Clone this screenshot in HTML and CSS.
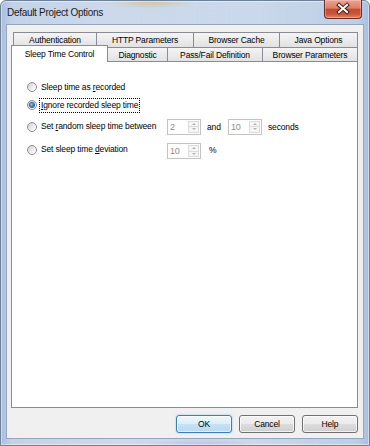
FILE: index.html
```html
<!DOCTYPE html>
<html>
    <head>
        <link rel="stylesheet" href="styles.css">
        <title>Default Project Options</title>
        <meta charset="UTF-8">
        <meta name="viewport" content="width=device-width, initial-scale=1.0">
    </head>
    <body>
        <div class="window">
            <div class="titlebar">
                <span class="title">Default Project Options</span>
                <div class="close-btn">
                    <svg width="36" height="18" viewBox="0 0 36 18">
                        <path d="M14 5 L22 12 M22 5 L14 12" stroke="#4b1c15" stroke-width="4" stroke-linecap="square"/>
                        <path d="M14 5 L22 12 M22 5 L14 12" stroke="#ffffff" stroke-width="2" stroke-linecap="square"/>
                    </svg>
                </div>
            </div>
            <div class="client">
                <div class="tab-row row-back">
                    <div class="tab w-auth">Authentication</div>
                    <div class="tab w-http">HTTP Parameters</div>
                    <div class="tab w-cache">Browser Cache</div>
                    <div class="tab w-java">Java Options</div>
                </div>
                <div class="tab-row row-front">
                    <div class="tab selected w-sleep">Sleep Time Control</div>
                    <div class="tab w-diag">Diagnostic</div>
                    <div class="tab w-pass">Pass/Fail Definition</div>
                    <div class="tab w-params">Browser Parameters</div>
                </div>
                <div class="panel">
                    <div class="opt-row r-short">
                        <div class="opt"><span class="radio"></span><span class="lbl">Sleep time as <u>r</u>ecorded</span></div>
                    </div>
                    <div class="opt-row r-short">
                        <div class="opt"><span class="radio checked"></span><span class="lbl focus"><u>I</u>gnore recorded sleep time</span></div>
                    </div>
                    <div class="opt-row r3">
                        <div class="opt"><span class="radio"></span><span class="lbl">Set <u>r</u>andom sleep time between</span></div>
                        <div class="spin"><span class="spin-val">2</span><span class="spin-btns"><span class="spin-up"></span><span class="spin-down"></span></span></div>
                        <span class="and">and</span>
                        <div class="spin"><span class="spin-val">10</span><span class="spin-btns"><span class="spin-up"></span><span class="spin-down"></span></span></div>
                        <span class="sec">seconds</span>
                    </div>
                    <div class="opt-row r4">
                        <div class="opt"><span class="radio"></span><span class="lbl">Set sleep time <u>d</u>eviation</span></div>
                        <div class="spin"><span class="spin-val">10</span><span class="spin-btns"><span class="spin-up"></span><span class="spin-down"></span></span></div>
                        <span class="pct">%</span>
                    </div>
                </div>
                <div class="buttons">
                    <div class="btn default">OK</div>
                    <div class="btn">Cancel</div>
                    <div class="btn">Help</div>
                </div>
            </div>
        </div>
    </body>
</html>
```
FILE: styles.css
```css
body {
    margin: 0;
    background: #ffffff;
}
.window {
    width: 370px;
    height: 446px;
    box-sizing: border-box;
    border: 1px solid #6f8196;
    border-radius: 6px 6px 0 0;
    padding: 0 5px 6px 5px;
    display: flex;
    flex-direction: column;
    font-family: "Liberation Sans", Arial, sans-serif;
    background:
        radial-gradient(ellipse 45px 7px at 150px 1px, rgba(214, 192, 146, 0.75), rgba(214, 192, 146, 0)),
        radial-gradient(ellipse 60px 8px at 200px 446px, rgba(160, 170, 235, 0.6), rgba(160, 170, 235, 0)),
        linear-gradient(to right, #a8bedf 0, #c2d3e9 3%, #cbd9eb 30%, #c9d8ea 70%, #bccfe7 97%, #a7bee0 100%);
    box-shadow: inset 0 0 0 1px rgba(255, 255, 255, 0.45);
}
.titlebar {
    height: 23px;
    display: flex;
    align-items: flex-start;
    flex-shrink: 0;
}
.title {
    font-size: 10px;
    letter-spacing: -0.3px;
    line-height: 12px;
    color: #1b1b1b;
    margin: 6px 0 0 1px;
}
.close-btn {
    margin: -1px 2px 0 auto;
    width: 38px;
    height: 19px;
    box-sizing: border-box;
    border: 1px solid #6e2b22;
    border-top: none;
    border-radius: 0 0 4px 4px;
    background: linear-gradient(#e9a697 0%, #dc7d68 45%, #c44b30 52%, #c9553a 78%, #df8a6c 100%);
    box-shadow: inset 0 0 0 1px rgba(255, 220, 210, 0.35);
}
.close-btn svg {
    display: block;
}
.client {
    flex: 1;
    border: 1px solid #95a6ba;
    background: #f0f0f0;
    padding: 7px 5px 5px 4px;
    display: flex;
    flex-direction: column;
}

/* tabs */
.tab-row {
    display: flex;
    flex-shrink: 0;
}
.row-back {
    height: 15px;
    padding-left: 2px;
}
.row-front {
    height: 14px;
    align-items: flex-end;
    position: relative;
    z-index: 1;
}
.tab {
    box-sizing: border-box;
    border: 1px solid #898c95;
    border-bottom: none;
    background: linear-gradient(#f4f4f4, #e2e2e2);
    display: flex;
    align-items: center;
    justify-content: center;
    font-size: 8.5px;
    letter-spacing: -0.15px;
    color: #000;
    flex-shrink: 0;
    white-space: nowrap;
}
.tab + .tab {
    margin-left: -1px;
}
.row-back .tab {
    height: 15px;
}
.row-front .tab {
    height: 14px;
}
.tab.selected {
    height: 17px;
    margin-bottom: -1px;
    padding-bottom: 1px;
    background: #ffffff;
    position: relative;
    z-index: 2;
}
.w-auth { width: 84px; }
.w-http { width: 98px; }
.w-cache { width: 87px; }
.w-java { width: 79px; }
.w-sleep { width: 97px; }
.w-diag { width: 61px; }
.w-pass { width: 96px; }
.w-params { width: 96px; }

.panel {
    height: 347px;
    box-sizing: border-box;
    flex-shrink: 0;
    border: 1px solid #898c95;
    background: #ffffff;
    padding: 16px 0 0 15px;
}

/* options */
.opt-row {
    display: flex;
    align-items: center;
    font-size: 8.5px;
    letter-spacing: -0.15px;
    color: #000;
}
.r-short { height: 18px; }
.r3 { height: 25px; }
.r4 { height: 21px; }
.opt {
    display: flex;
    align-items: center;
    width: 140px;
    flex-shrink: 0;
}
.radio {
    width: 10px;
    height: 10px;
    box-sizing: border-box;
    border-radius: 50%;
    border: 1px solid #8d8f93;
    background: linear-gradient(135deg, #cfcfcf, #f3f3f3 65%, #ffffff);
    position: relative;
    flex-shrink: 0;
}
.radio.checked::after {
    content: "";
    position: absolute;
    left: 2px;
    top: 2px;
    width: 4px;
    height: 4px;
    border-radius: 50%;
    background: radial-gradient(circle at 35% 35%, #8cc4f0, #1d56a0 75%);
    box-shadow: 0 0 0 1px #2c5f9e;
}
.lbl {
    margin-left: 3px;
    padding: 0 1px;
    line-height: 13px;
    white-space: nowrap;
}
.lbl.focus {
    outline: 1px dotted #000;
}
.spin {
    width: 34px;
    height: 16px;
    box-sizing: border-box;
    border: 1px solid #c3c3c3;
    background: #ffffff;
    display: flex;
    flex-shrink: 0;
    color: #8e8e8e;
}
.r4 .spin {
    align-self: flex-end;
    margin-bottom: 1px;
}
.spin-val {
    flex: 1;
    padding-left: 2px;
    line-height: 14px;
    font-size: 9px;
}
.spin-btns {
    width: 11px;
    display: flex;
    flex-direction: column;
    margin: 1px 1px 1px 0;
}
.spin-up, .spin-down {
    flex: 1;
    border: 1px solid #dcdcdc;
    background: #f6f6f6;
    display: flex;
    align-items: center;
    justify-content: center;
}
.spin-down {
    border-top: none;
}
.spin-up::before {
    content: "";
    border-left: 2px solid transparent;
    border-right: 2px solid transparent;
    border-bottom: 2px solid #b3b3b3;
}
.spin-down::before {
    content: "";
    border-left: 2px solid transparent;
    border-right: 2px solid transparent;
    border-top: 2px solid #b3b3b3;
}
.and {
    width: 21px;
    margin-left: 6px;
}
.sec {
    margin-left: 6px;
}
.pct {
    margin-left: 8px;
}

/* buttons */
.buttons {
    display: flex;
    justify-content: flex-end;
    gap: 7px;
    margin-top: 7px;
}
.btn {
    width: 56px;
    height: 18px;
    box-sizing: border-box;
    border: 1px solid #707070;
    border-radius: 3px;
    background: linear-gradient(#f2f2f2 0%, #ebebeb 49%, #dddddd 50%, #cfcfcf 100%);
    box-shadow: inset 0 0 0 1px rgba(255, 255, 255, 0.7);
    display: flex;
    align-items: center;
    justify-content: center;
    font-size: 8.5px;
    letter-spacing: -0.15px;
    color: #000;
}
.btn.default {
    border-color: #3c7fb1;
    background: linear-gradient(#eef7fd 0%, #dcedf9 49%, #c6e2f5 50%, #b6d9f1 100%);
    box-shadow: inset 0 0 0 1px rgba(255, 255, 255, 0.6), 0 0 2px rgba(60, 150, 220, 0.5);
}
```
